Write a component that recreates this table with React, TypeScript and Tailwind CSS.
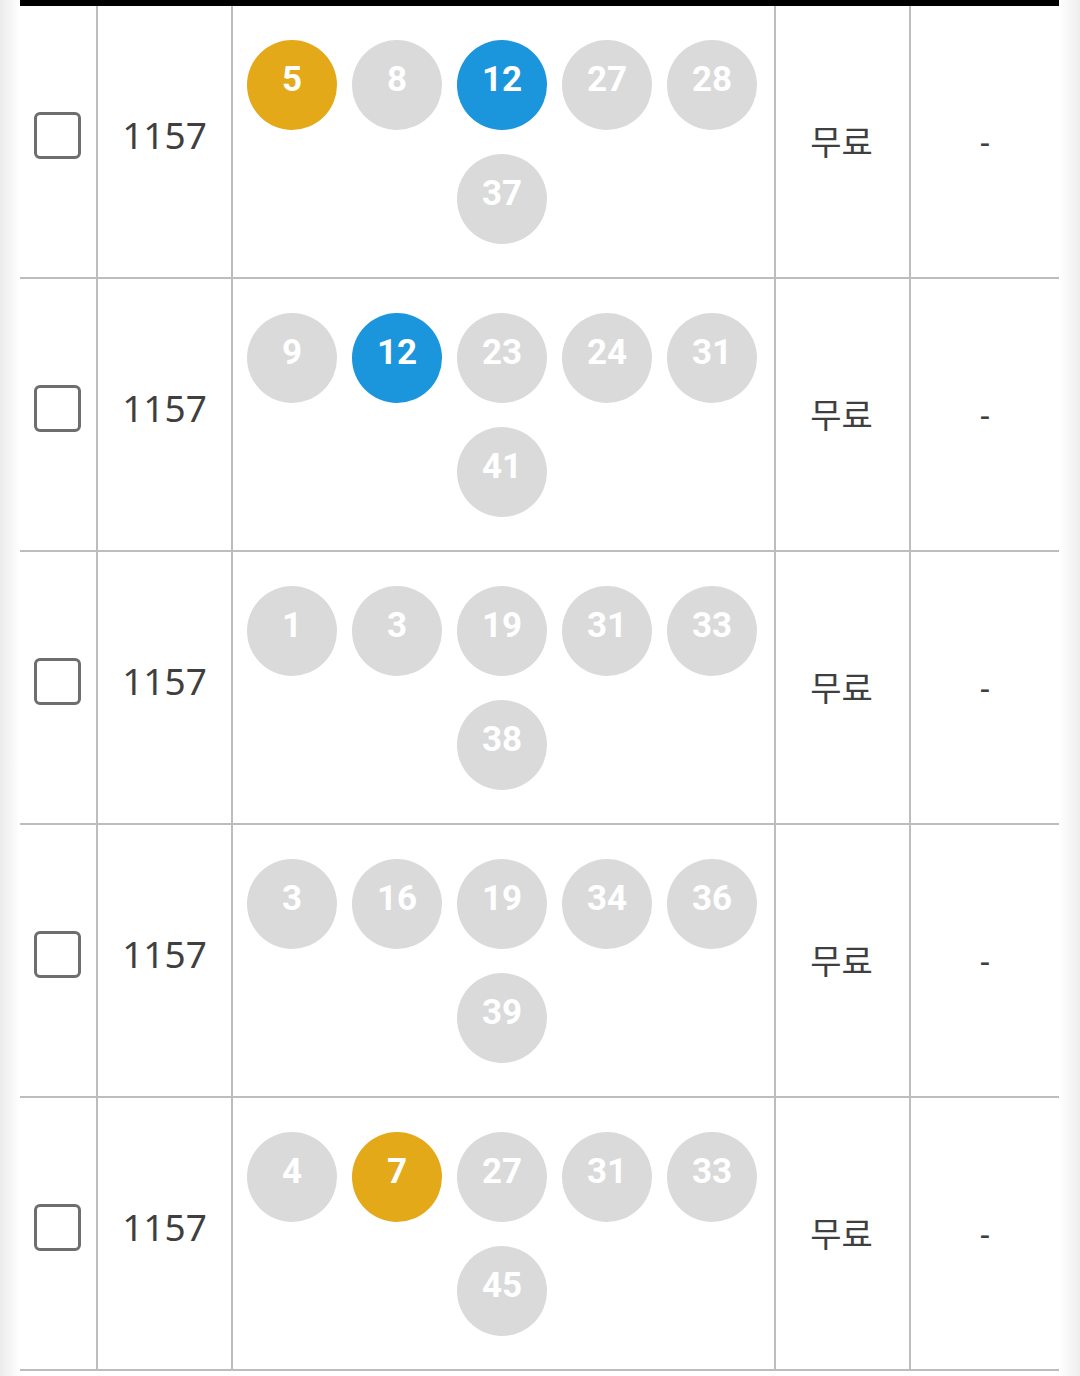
const rows: { nums: number[]; colored: Record<number, string> }[] = [
  { nums: [5, 8, 12, 27, 28, 37], colored: { 5: 'bg-[#e3a918]', 12: 'bg-[#1b95dc]' } },
  { nums: [9, 12, 23, 24, 31, 41], colored: { 12: 'bg-[#1b95dc]' } },
  { nums: [1, 3, 19, 31, 33, 38], colored: {} },
  { nums: [3, 16, 19, 34, 36, 39], colored: {} },
  { nums: [4, 7, 27, 31, 33, 45], colored: { 7: 'bg-[#e3a918]' } }
];

function Ball({ n, color }: { n: number; color?: string }) {
  return (
    <div
      className={`w-[90px] h-[90px] rounded-full flex items-center justify-center pb-[8px] text-white text-[35px] font-bold ${color ?? 'bg-[#dadada]'}`}
      style={{ fontFamily: 'Roboto, "Liberation Sans", sans-serif' }}
    >
      {n}
    </div>
  );
}

export default function App() {
  return (
    <div className="w-[1080px] h-[1376px] flex bg-white overflow-hidden">
      <div className="w-[20px] bg-gradient-to-r from-[#ebebeb] to-white" />
      <div className="w-[1039px] flex flex-col">
        <div className="h-[6px] bg-black" />
        {rows.map((row, index) => (
          <div key={index} className="h-[273px] flex border-b-2 border-[#bdbdbd]">
            <div className="w-[78px] border-r-2 border-[#bdbdbd] flex items-center justify-center pb-[13px]">
              <div className="w-[47px] h-[47px] rounded-[6px] border-[3px] border-[#6e6e6e] ml-[-1px]" />
            </div>
            <div
              className="w-[135px] border-r-2 border-[#bdbdbd] flex items-center justify-center pb-[13px] text-[37px] text-[#3f3f3f]"
              style={{ fontFamily: '"Noto Sans", "Open Sans", sans-serif' }}
            >
              1157
            </div>
            <div className="w-[543px] border-r-2 border-[#bdbdbd] flex flex-wrap justify-center content-center gap-x-[15px] gap-y-[24px] pr-[3px]">
              {row.nums.map((n, i) => (
                <Ball key={i} n={n} color={row.colored[n]} />
              ))}
            </div>
            <div
              className="w-[135px] border-r-2 border-[#bdbdbd] flex items-center justify-center pb-[2px] pr-[2px] text-[34px] text-[#3f3f3f]"
              style={{ fontFamily: '"Noto Sans CJK KR", "Noto Sans", sans-serif' }}
            >
              무료
            </div>
            <div
              className="flex-1 flex items-center justify-center text-[32px] text-[#3f3f3f]"
              style={{ fontFamily: '"Noto Sans", sans-serif' }}
            >
              -
            </div>
          </div>
        ))}
      </div>
      <div className="flex-1 bg-gradient-to-l from-[#eeeeee] to-white" />
    </div>
  );
}
